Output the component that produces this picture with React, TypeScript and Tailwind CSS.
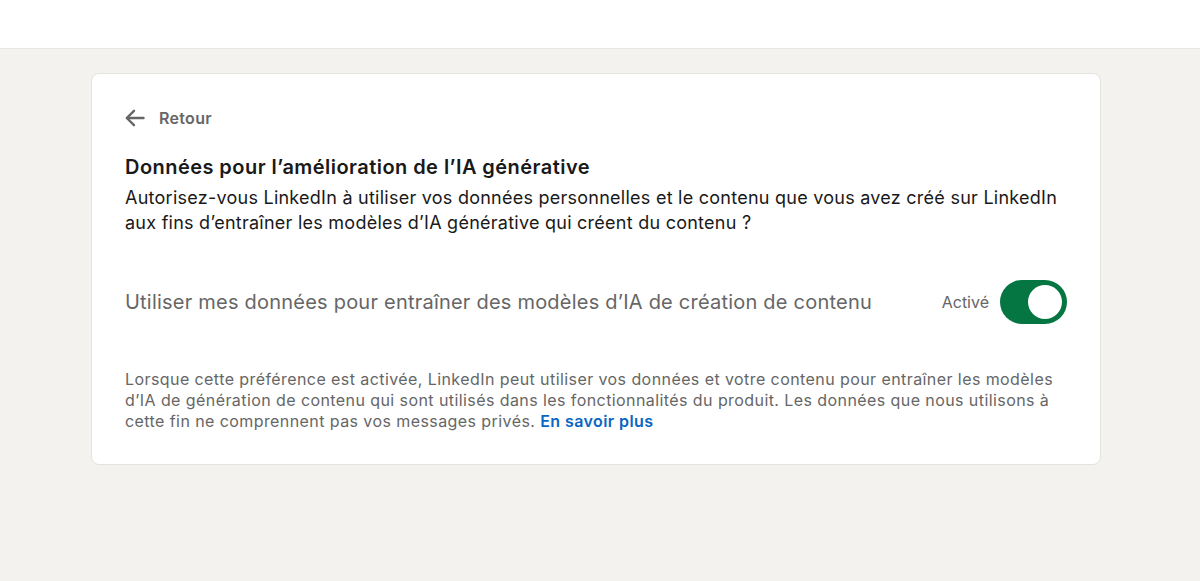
export default function App() {
  return (
    <div
      className="min-h-[581px] bg-[#f4f2ee] text-[#191919]"
      style={{ fontFamily: 'Inter, "Liberation Sans", Arial, sans-serif' }}
    >
      {/* Top bar */}
      <div className="h-[49px] bg-white border-b border-[#e8e6e1]" />

      <div className="pt-[24px] pl-[91px] pr-[99px]">
        <div className="bg-white rounded-[8px] border border-[#e5e3df] pl-[33px] pr-[33px] pt-[32px] pb-[32px]">
          {/* Back */}
          <button className="flex items-center gap-[14px] text-[#666666] font-semibold text-[16px] leading-[24px] tracking-[0.3px]">
            <svg width="20" height="18" viewBox="0 0 20 18" fill="none" stroke="currentColor" strokeWidth="2.4" strokeLinecap="round" strokeLinejoin="round">
              <path d="M18.5 9H2" />
              <path d="M9 1.8L1.8 9l7.2 7.2" />
            </svg>
            <span>Retour</span>
          </button>

          {/* Heading */}
          <h1 className="mt-[24px] text-[20px] leading-[26px] font-semibold text-[#191919] tracking-[0.45px]">
            Données pour l’amélioration de l’IA générative
          </h1>
          <p className="mt-[5px] text-[18px] leading-[25px] text-[#191919] tracking-[0.25px]">
            Autorisez-vous LinkedIn à utiliser vos données personnelles et le contenu que vous avez créé sur LinkedIn aux fins d’entraîner les modèles d’IA générative qui créent du contenu ?
          </p>

          {/* Toggle row */}
          <div className="mt-[45px] flex items-center justify-between">
            <span className="text-[20px] leading-[28px] text-[#666666] tracking-[0.22px]">
              Utiliser mes données pour entraîner des modèles d’IA de création de contenu
            </span>
            <div className="flex items-center gap-[11px]">
              <span className="text-[16px] text-[#666666]">Activé</span>
              <div className="w-[67px] h-[44px] rounded-full bg-[#057642] flex items-center justify-end pr-[5px]">
                <div className="w-[34px] h-[34px] rounded-full bg-white" />
              </div>
            </div>
          </div>

          {/* Footnote */}
          <p className="mt-[45px] text-[16px] leading-[21px] text-[#666666] tracking-[0.42px]">
            Lorsque cette préférence est activée, LinkedIn peut utiliser vos données et votre contenu pour entraîner les modèles d’IA de génération de contenu qui sont utilisés dans les fonctionnalités du produit. Les données que nous utilisons à cette fin ne comprennent pas vos messages privés.{' '}
            <a className="text-[#0a66c2] font-semibold">En savoir plus</a>
          </p>
        </div>
      </div>
    </div>
  )
}
